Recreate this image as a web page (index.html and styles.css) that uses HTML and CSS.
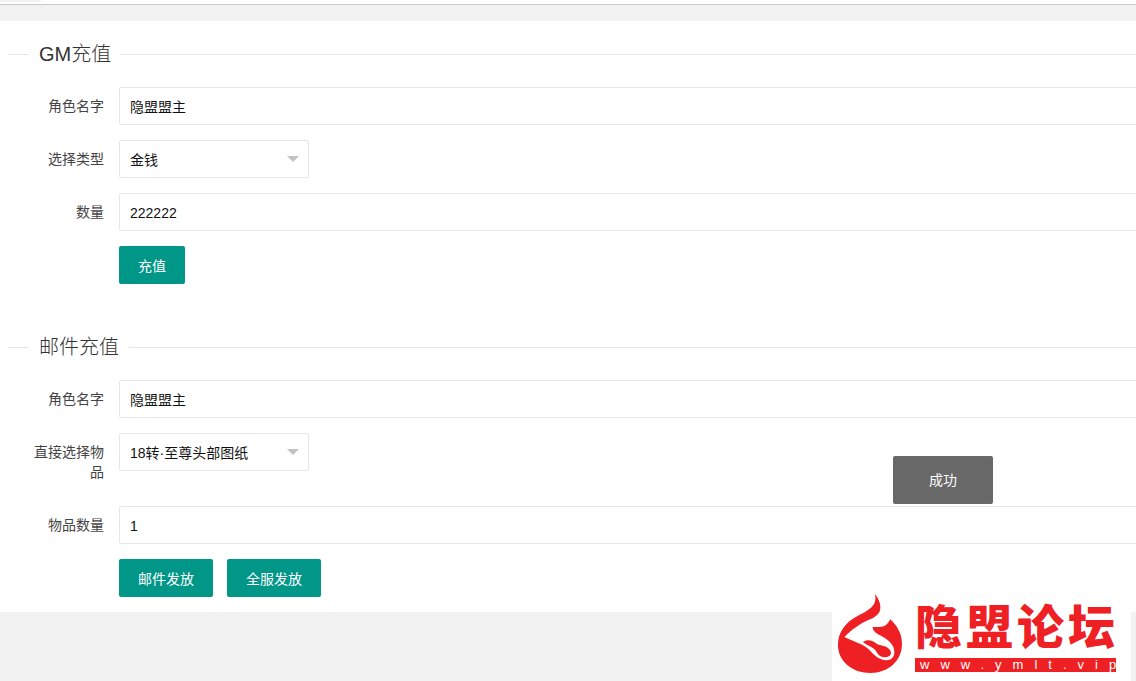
FILE: index.html
```html
<!DOCTYPE html>
<html lang="zh-CN">
<head>
  <meta charset="UTF-8">
  <title>GM充值</title>
  <link rel="stylesheet" href="styles.css">
</head>
<body>
  <div class="topbar"><span class="tab"></span></div>

  <div class="card">
    <fieldset class="field">
      <legend>GM充值</legend>
      <div class="row">
        <label>角色名字</label>
        <div class="input">隐盟盟主</div>
      </div>
      <div class="row">
        <label>选择类型</label>
        <div class="select">金钱<i class="caret"></i></div>
      </div>
      <div class="row">
        <label>数量</label>
        <div class="input">222222</div>
      </div>
      <div class="row">
        <label></label>
        <button class="btn">充值</button>
      </div>
    </fieldset>

    <fieldset class="field second">
      <legend>邮件充值</legend>
      <div class="row">
        <label>角色名字</label>
        <div class="input">隐盟盟主</div>
      </div>
      <div class="row tall">
        <label>直接选择物品</label>
        <div class="select">18转·至尊头部图纸<i class="caret"></i></div>
      </div>
      <div class="row">
        <label>物品数量</label>
        <div class="input">1</div>
      </div>
      <div class="row">
        <label></label>
        <button class="btn">邮件发放</button>
        <button class="btn">全服发放</button>
      </div>
    </fieldset>
  </div>

  <div class="toast">成功</div>

  <div class="logo">
    <svg class="flame" width="80" height="88" viewBox="0 0 80 88">
      <g transform="translate(-3.8 0) scale(1.085 1)">
        <path fill="#ee2024" d="M43 4C50 13 49 22 45 25L57 29C64 36 68 44 68 54C68 71 55 83 39 83C22 83 9 71 9 55C9 42 16 32 27 26C36 21 46 16 43 4Z"/>
        <path fill="#fff" d="M15 47C21 40 29 34 37 30C40 29 43 27 45 25L58 27C56 33 53 37 47 37L41 37C41 41 44 43 49 46C56 50 61 55 61 62C61 68 57 71 52 70C46 69 42 65 38 60C33 54 24 52 15 47Z"/>
        <path fill="#ee2024" d="M32 52C36 49 41 50 45 54C48 56 52 55 55 58C59 61 59 66 54 67C49 68 46 65 44 61C42 57 36 56 32 52Z"/>
      </g>
    </svg>
    <div class="brand">
      <div class="brand-name">隐盟论坛</div>
      <div class="brand-url">www.ymlt.vi<span class="last">p</span></div>
    </div>
  </div>
</body>
</html>
```

FILE: styles.css
```css
html, body {
  margin: 0;
  padding: 0;
  height: 681px;
  overflow: hidden;
}

body {
  position: relative;
  background: #f2f2f2;
  font-family: "Liberation Sans", "Noto Sans CJK SC", sans-serif;
  font-size: 14px;
  color: #333;
}

.topbar {
  height: 4px;
  background: #fff;
  border-bottom: 1px solid #c9c9c9;
  margin-bottom: 16px;
}

.tab {
  display: block;
  width: 41px;
  height: 2px;
  background: #f2f2f2;
}

.card {
  background: #fff;
  height: 591px;
  box-sizing: border-box;
  padding: 19px 0 0 8px;
  overflow: hidden;
}

.field {
  margin: 0 -40px 0 0;
  padding: 19px 0 0;
  border: 0;
  border-top: 1px solid #e6e6e6;
}

.second {
  margin-top: 34px;
}

.field legend {
  margin-left: 21px;
  padding: 0 10px;
  font-size: 20px;
  font-weight: 300;
  line-height: 28px;
}

.row {
  display: flex;
  align-items: flex-start;
  margin-bottom: 15px;
}

.tall {
  margin-bottom: 24px;
}

.row label {
  flex: none;
  box-sizing: border-box;
  width: 111px;
  padding: 9px 15px 0 15px;
  text-align: right;
  line-height: 20px;
  color: #444;
}

.input, .select {
  box-sizing: border-box;
  height: 38px;
  line-height: 38px;
  padding-left: 10px;
  border: 1px solid #e6e6e6;
  border-radius: 2px;
  color: #111;
  background: #fff;
}

.input {
  flex: 1;
}

.select {
  position: relative;
  width: 190px;
}

.caret {
  position: absolute;
  right: 9px;
  top: 15px;
  border-style: solid;
  border-width: 6px 6px 0;
  border-color: #c2c2c2 transparent transparent;
}

.btn {
  height: 38px;
  padding: 0 19px;
  margin: 0 14px 0 0;
  border: 0;
  border-radius: 2px;
  background: #009688;
  color: #fff;
  font-family: inherit;
  font-size: 14px;
}

.toast {
  position: absolute;
  left: 893px;
  top: 456px;
  width: 100px;
  height: 48px;
  line-height: 48px;
  text-align: center;
  background: #686868;
  border-radius: 2px;
  color: #fff;
}

.logo {
  position: absolute;
  left: 832px;
  top: 590px;
  width: 299px;
  height: 91px;
  display: flex;
  gap: 3px;
  background: linear-gradient(transparent 22px, #fff 22px);
}

.flame {
  flex: none;
}

.brand {
  margin-top: 9px;
  width: 201px;
}

.brand-name {
  font-family: "Noto Sans CJK SC", sans-serif;
  font-weight: 900;
  font-size: 47px;
  letter-spacing: 4px;
  line-height: 50px;
  color: #ee2024;
  white-space: nowrap;
}

.brand-url {
  margin-top: 9px;
  height: 14px;
  line-height: 14px;
  background: #ee2024;
  color: #fff;
  font-size: 13px;
  letter-spacing: 11px;
  padding-left: 5px;
  white-space: nowrap;
}

.last {
  letter-spacing: 0;
}
```
